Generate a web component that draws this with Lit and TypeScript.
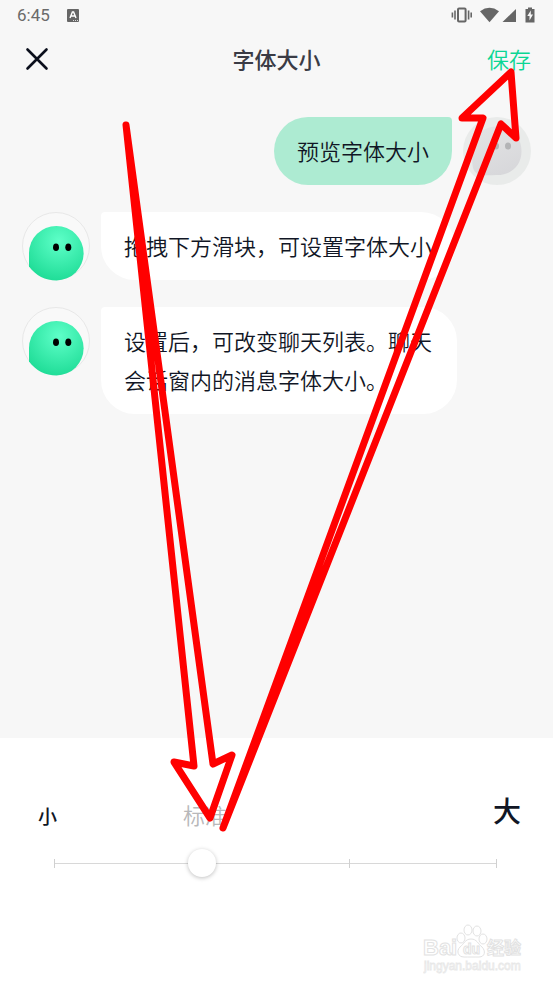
import { LitElement, html, svg, css } from "lit";
import { customElement, property, state } from "lit/decorators.js";

@customElement("status-bar")
class StatusBar extends LitElement {
  static styles = css`
    :host {
      display: flex;
      align-items: center;
      justify-content: space-between;
      height: 30px;
      padding: 0 16px 0 17px;
      color: #6a6a6a;
      font: 400 17px/30px Roboto, sans-serif;
    }
    .group {
      display: flex;
      align-items: center;
    }
    .left {
      gap: 17px;
    }
    .icon {
      display: block;
    }
  `;

  render() {
    return html`
      <div class="group left">
        <span>6:45</span>
        <svg class="icon" width="12" height="13" viewBox="0 0 12 13">
          <rect width="12" height="13" rx="1" fill="#666" />
          <path d="M3 9 L5.4 3 H6.6 L9 9 M4.2 7 H7.8" fill="none" stroke="#fff" stroke-width="1.4" />
          <path d="M6 11.5h1M8 11.5h1M10 11.5h1" stroke="#ddd" stroke-width="1" />
        </svg>
      </div>
      <svg class="icon" width="86" height="18" viewBox="0 0 86 18">
        <g fill="none" stroke="#666">
          <rect x="7" y="2.6" width="7.6" height="12.800" rx="1" stroke-width="2" />
          <path d="M4 4.500v9M17.600 4.500v9M1.400 6.500v5M20.200 6.500v5" stroke-width="1.600" />
        </g>
        <path d="M29 5.200Q38.500 -1.500 48 5.200L38.500 16.200Z" fill="#666" />
        <path d="M65 3v13H51.500Z" fill="#666" />
        <path d="M77 1.500h4v1.500h2.500v13.500h-9V3h2.500Z" fill="#666" />
        <path d="M79.800 4.500l-3.500 5.500h2.200v4.500l3.500-6h-2.200Z" fill="#f7f7f7" />
      </svg>
    `;
  }
}

@customElement("user-avatar")
class UserAvatar extends LitElement {
  @property() tone: "green" | "grey" = "green";

  static styles = css`
    :host {
      display: block;
      flex: none;
      width: 68px;
      height: 68px;
    }
    .face {
      display: block;
      overflow: visible;
    }
  `;

  private green() {
    return svg`
      <radialGradient id="g" cx="0.55" cy="0.28" r="0.75">
        <stop offset="0" stop-color="#5effc8" />
        <stop offset="1" stop-color="#1edc96" />
      </radialGradient>
      <circle cx="34" cy="34" r="33.500" fill="#f9f9f9" stroke="#e8e8e8" />
      <path d="M7 54.500V41A27.300 27.300 0 1 1 34.500 68.500C23 68.500 14 63.500 7 54.500Z" fill="url(#g)" />
      <ellipse cx="34" cy="35.300" rx="3" ry="3.800" />
      <ellipse cx="46.300" cy="35.300" rx="3" ry="3.800" />
    `;
  }

  private grey() {
    return svg`
      <linearGradient id="g" x1="0.3" y1="0" x2="0.7" y2="1">
        <stop offset="0" stop-color="#e2e3e4" />
        <stop offset="1" stop-color="#d7d7da" />
      </linearGradient>
      <circle cx="34" cy="34" r="34" fill="#e9ebea" />
      <path d="M34 9.500C49 9.500 58.500 20 58.500 34S49 58 34 58C27 58 21 59 15 57C9 54 9 48 9.500 36C10 20 19 9.500 34 9.500Z" fill="url(#g)" />
      <ellipse cx="33" cy="29" rx="3" ry="3.600" fill="#b3b4b6" />
      <ellipse cx="45" cy="29" rx="3" ry="3.600" fill="#b3b4b6" />
    `;
  }

  render() {
    return html`
      <svg class="face" width="68" height="68" viewBox="0 0 68 68">
        ${this.tone === "green" ? this.green() : this.grey()}
      </svg>
    `;
  }
}

@customElement("chat-message")
class ChatMessage extends LitElement {
  @property({ type: Boolean, reflect: true }) own = false;

  static styles = css`
    :host {
      display: flex;
      align-items: flex-start;
      gap: 11px;
    }
    :host([own]) {
      flex-direction: row-reverse;
    }
    .bubble {
      margin: 0;
      max-width: 356px;
      box-sizing: border-box;
      padding: 14px 23px 15px;
      border-radius: 4px 34px 34px 34px;
      background: #fff;
      color: #111625;
      font-size: 22px;
      font-weight: 350;
      line-height: 39px;
    }
    :host([own]) .bubble {
      border-radius: 34px 4px 34px 34px;
      background: #adebd2;
    }
  `;

  render() {
    return html`
      <user-avatar tone=${this.own ? "grey" : "green"}></user-avatar>
      <p class="bubble"><slot></slot></p>
    `;
  }
}

@customElement("size-slider")
class SizeSlider extends LitElement {
  @state() private level = 1;

  static styles = css`
    :host {
      display: block;
      padding: 56px 32px 105px 38px;
      background: #fff;
      color: #111625;
    }
    .labels {
      display: grid;
      grid-template-columns: 3fr 4fr 3fr;
      align-items: center;
      height: 44px;
    }
    .small {
      font-size: 19px;
      font-weight: 500;
      line-height: 40px;
    }
    .normal {
      align-self: start;
      color: #b8b8ba;
      font-size: 22px;
      font-weight: 350;
      line-height: 40px;
    }
    .large {
      align-self: start;
      font-size: 28px;
      font-weight: 500;
      line-height: 32px;
      text-align: right;
    }
    .track {
      display: grid;
      margin: 9px 10px 0 2px;
    }
    .scale,
    .range {
      grid-area: 1 / 1;
    }
    .scale {
      display: flex;
      align-items: center;
      justify-content: space-between;
      margin: 0 14px;
      background: linear-gradient(#d8d8d8, #d8d8d8) center / 100% 1px no-repeat;
    }
    .tick {
      width: 1px;
      height: 9px;
      background: #d0d0d0;
    }
    .tick.current {
      visibility: hidden;
    }
    .range {
      appearance: none;
      width: 100%;
      height: 32px;
      margin: 0;
      background: none;
      outline: none;
    }
    .range::-webkit-slider-thumb {
      appearance: none;
      width: 28px;
      height: 28px;
      border-radius: 50%;
      background: #fff;
      box-shadow: 0 1px 4px rgba(0, 0, 0, 0.25);
    }
  `;

  render() {
    return html`
      <div class="labels">
        <span class="small">小</span>
        <label class="normal" for="size">标准</label>
        <span class="large">大</span>
      </div>
      <div class="track">
        <div class="scale">
          ${[0, 1, 2, 3].map(
            (n) => html`<span class="tick ${n === this.level ? "current" : ""}"></span>`
          )}
        </div>
        <input
          class="range"
          id="size"
          type="range"
          min="0"
          max="3"
          step="1"
          .value=${String(this.level)}
          @input=${(e: Event) => (this.level = Number((e.target as HTMLInputElement).value))}
        />
      </div>
    `;
  }
}

@customElement("app-root")
class AppRoot extends LitElement {
  static styles = css`
    :host {
      position: relative;
      display: flex;
      flex-direction: column;
      min-height: 100vh;
      overflow: hidden;
      background: #f7f7f7;
      font-family: "Noto Sans CJK SC", sans-serif;
    }
    .bar {
      display: grid;
      grid-template-columns: 1fr auto 1fr;
      align-items: center;
      height: 56px;
      padding: 0 22px;
    }
    .title {
      margin: 0;
      color: #3a3b45;
      font-size: 22px;
      font-weight: 500;
      line-height: 32px;
    }
    .close,
    .save {
      padding: 0;
      border: 0;
      background: none;
      font: inherit;
    }
    .close {
      justify-self: start;
      width: 30px;
      height: 30px;
    }
    .close-icon {
      display: block;
    }
    .save {
      justify-self: end;
      color: #0bd694;
      font-size: 22px;
      font-weight: 350;
      line-height: 32px;
    }
    .chat {
      flex: 1;
      display: flex;
      flex-direction: column;
      gap: 27px;
      padding: 31px 22px;
    }
    .overlay {
      position: absolute;
      top: 0;
      left: 0;
      pointer-events: none;
    }
    .watermark {
      position: absolute;
      right: 28px;
      bottom: 8px;
      pointer-events: none;
      font-family: "Liberation Sans", "Noto Sans CJK SC", sans-serif;
      font-weight: 700;
    }
  `;

  render() {
    return html`
      <status-bar></status-bar>
      <header class="bar">
        <button class="close" aria-label="关闭">
          <svg class="close-icon" width="30" height="30" viewBox="0 0 30 30">
            <path d="M5.500 6.500l19 19M24.500 6.500l-19 19" stroke="#0b0f1c" stroke-width="2.600" stroke-linecap="round" />
          </svg>
        </button>
        <h1 class="title">字体大小</h1>
        <button class="save">保存</button>
      </header>
      <main class="chat">
        <chat-message own>预览字体大小</chat-message>
        <chat-message>拖拽下方滑块，可设置字体大小</chat-message>
        <chat-message>设置后，可改变聊天列表。聊天会话窗内的消息字体大小。</chat-message>
      </main>
      <size-slider></size-slider>

      <svg class="watermark" width="102" height="54" viewBox="0 0 102 54">
        <g fill="#fff" stroke="#e2e2e2" stroke-width="1">
          <text x="0" y="33" font-size="22">Bai</text>
          <ellipse cx="38" cy="16" rx="4" ry="5" />
          <ellipse cx="45" cy="8" rx="4" ry="5" />
          <ellipse cx="54" cy="9" rx="4" ry="5" />
          <ellipse cx="60" cy="17" rx="4" ry="5" />
          <path d="M48 17C42 17 41 22 37 25C33 29 35 35 41 35C45 35 51 35 56 35C62 35 63 29 59 25C55 22 54 17 48 17Z" />
          <text x="40" y="32" font-size="14">du</text>
          <text x="64" y="32" font-size="17">经验</text>
        </g>
        <text x="1" y="48" font-size="12" font-weight="400" fill="#fff" stroke="#e8e8e8" stroke-width="0.800">jingyan.baidu.com</text>
      </svg>

      <svg class="overlay" width="553" height="984" viewBox="0 0 553 984">
        <g fill="none" stroke="#f00" stroke-width="7" stroke-linecap="round" stroke-linejoin="round">
          <path d="M126 125L194 766L174 762L210 818L232 755L213 764Z" />
          <path d="M223 828L483 118L462 118L511 72L516 138L501 124Z" />
        </g>
      </svg>
    `;
  }
}
